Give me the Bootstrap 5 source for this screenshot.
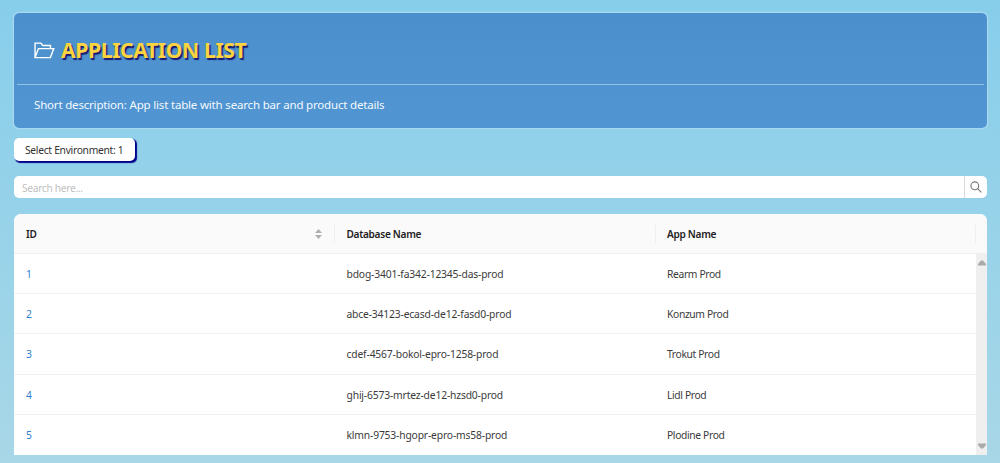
<!DOCTYPE html>
<html lang="en">
<head>
<meta charset="utf-8">
<meta name="viewport" content="width=device-width, initial-scale=1">
<title>Application List</title>
<link href="https://cdn.jsdelivr.net/npm/bootstrap@5.3.0/dist/css/bootstrap.min.css" rel="stylesheet">
<style>
body{height:463px;overflow:hidden;font-family:"Noto Sans","Open Sans",sans-serif;font-size:10.3px;line-height:16px;color:#3a3a3a;background:linear-gradient(#87ceeb,#a8d7e7)}
.page{padding:12px 12px 0 13px}
.hero{height:117px;border:1px solid #a9d8f1;border-radius:6px;background:linear-gradient(#4b90cc,#5195d2);background-clip:padding-box;color:#f4f9fd;padding:0 3px;box-shadow:0 0 1px #c4e6f5}
.hero-top{height:72px;border-bottom:1px solid #93c2e6;padding:3px 17px 0}
.hero h1{font-size:21.2px;line-height:30px;font-weight:700;color:#fdd43f;text-shadow:1.5px 1.5px 1px #191970;letter-spacing:-.4px;margin:0 0 0 6px}
.hero p{font-size:11.5px;line-height:20px;padding:10px 17px 0;margin:0;letter-spacing:-.18px}
.env{height:23px;width:121px;margin:9px 0 0 1px;border-radius:5px;background:#fff;box-shadow:1.5px 1.5px 1px #00008b;color:#333;font-size:10.3px;letter-spacing:-.3px;padding:1px 0 0 11px;border:0;line-height:22px;text-align:left}
.search{height:22px;width:973px;margin:15px 0 0 1px;background:#fff;border-radius:5px}
.search input{font-size:10.2px;letter-spacing:-.3px;border:0;padding:2px 8px 0;color:#333;background:transparent;box-shadow:none!important;height:22px;min-height:0}
.search input::placeholder{color:#bfbfbf;opacity:1}
.search button{width:24px;border:0;border-left:1px solid #d9d9d9;background:transparent;padding:0}
.grid{width:973px;height:241px;margin:16px 0 0 1px;background:#fff;border-radius:7px 7px 0 0}
.grid-head{height:40px;background:#fafafa;border-bottom:1px solid #f0f0f0;font-size:10.1px;letter-spacing:-.3px;font-weight:600;color:#222}
.c1,.c2{width:321px;padding-left:12px}
.c2{padding-left:11.5px}
.c3{flex:1;padding-left:11px}
.sort{margin-right:12px}
.rail-gap{width:11px}
.sep{height:18px;border-right:1px solid #efefef}
.line{height:40.2px;padding-top:1px;border-bottom:1px solid #f2f2f2;letter-spacing:-.16px}
.line .c3{letter-spacing:-.36px}
.line:last-child{border-bottom:0;padding-top:0}
.line a{color:#2f7fd0;text-decoration:none}
.rail{width:11px;background:#efefef;padding:6px 0}
</style>
</head>
<body>
<main class="page">
  <header class="hero">
    <div class="hero-top d-flex align-items-center">
      <svg width="21" height="17" viewBox="0 0 22 18" fill="none" stroke="#fff" stroke-width="1.5"><path d="M1 16.5V1.2H7.2L9.2 3.7H17.3V7M1 16.5L4.6 7H20.8L17.2 16.5Z"/></svg>
      <h1>APPLICATION LIST</h1>
    </div>
    <p>Short description: App list table with search bar and product details</p>
  </header>
  <button class="env d-block">Select Environment: 1</button>
  <div class="search d-flex">
    <input class="form-control flex-grow-1" placeholder="Search here...">
    <button class="d-flex align-items-center justify-content-center" aria-label="Search"><svg width="12" height="12" viewBox="0 0 12 12" fill="none" stroke="#777" stroke-width="1.1"><circle cx="4.8" cy="4.8" r="3.9"/><path d="M7.7 7.7L11.3 11.3"/></svg></button>
  </div>
  <section class="grid d-flex flex-column overflow-hidden">
    <div class="grid-head d-flex align-items-center flex-shrink-0">
      <div class="c1 d-flex align-items-center sep"><span class="flex-grow-1">ID</span><svg class="sort" width="7" height="10" viewBox="0 0 7 10" fill="#b0b0b0"><path d="M0 4L3.5 0L7 4ZM0 6H7L3.5 10Z"/></svg></div>
      <div class="c2 d-flex align-items-center sep">Database Name</div>
      <div class="c3 d-flex align-items-center sep">App Name</div>
      <div class="rail-gap"></div>
    </div>
    <div class="d-flex flex-grow-1">
      <div class="flex-grow-1">
        <div class="line d-flex align-items-center"><div class="c1"><a href="#">1</a></div><div class="c2">bdog-3401-fa342-12345-das-prod</div><div class="c3">Rearm Prod</div></div>
        <div class="line d-flex align-items-center"><div class="c1"><a href="#">2</a></div><div class="c2">abce-34123-ecasd-de12-fasd0-prod</div><div class="c3">Konzum Prod</div></div>
        <div class="line d-flex align-items-center"><div class="c1"><a href="#">3</a></div><div class="c2">cdef-4567-bokol-epro-1258-prod</div><div class="c3">Trokut Prod</div></div>
        <div class="line d-flex align-items-center"><div class="c1"><a href="#">4</a></div><div class="c2">ghij-6573-mrtez-de12-hzsd0-prod</div><div class="c3">Lidl Prod</div></div>
        <div class="line d-flex align-items-center"><div class="c1"><a href="#">5</a></div><div class="c2">klmn-9753-hgopr-epro-ms58-prod</div><div class="c3">Plodine Prod</div></div>
      </div>
      <div class="rail d-flex flex-column justify-content-between align-items-center">
        <svg width="8" height="6" viewBox="0 0 8 6" fill="#aaa"><path d="M0 5.5V4L3 .5H5L8 4V5.5Z"/></svg>
        <svg width="8" height="6" viewBox="0 0 8 6" fill="#aaa"><path d="M0 .5V2L3 5.5H5L8 2V.5Z"/></svg>
      </div>
    </div>
  </section>
</main>
<script src="https://cdn.jsdelivr.net/npm/bootstrap@5.3.0/dist/js/bootstrap.bundle.min.js"></script>
</body>
</html>
